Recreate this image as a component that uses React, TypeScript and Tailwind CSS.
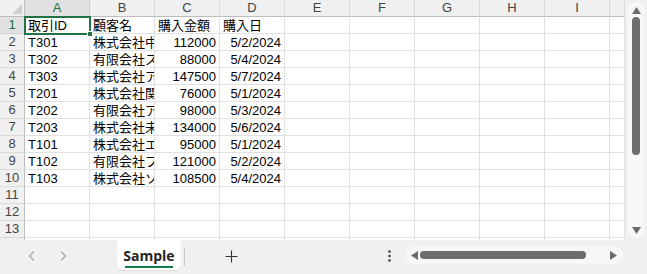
import React from 'react';

const COLS = ['A', 'B', 'C', 'D', 'E', 'F', 'G', 'H', 'I', ''];
const ROW_COUNT = 14;

// 顧客名 is cut at the cell edge, as in the sheet
const data: [string, string, string, string][] = [
  ['取引ID', '顧客名', '購入金額', '購入日'],
  ['T301', '株式会社中', '112000', '5/2/2024'],
  ['T302', '有限会社ス', '88000', '5/4/2024'],
  ['T303', '株式会社ア', '147500', '5/7/2024'],
  ['T201', '株式会社関', '76000', '5/1/2024'],
  ['T202', '有限会社ア', '98000', '5/3/2024'],
  ['T203', '株式会社未', '134000', '5/6/2024'],
  ['T101', '株式会社エ', '95000', '5/1/2024'],
  ['T102', '有限会社ブ', '121000', '5/2/2024'],
  ['T103', '株式会社ソ', '108500', '5/4/2024'],
];

const font = { fontFamily: '"Liberation Sans", "Noto Sans CJK JP", sans-serif' };

function Cell({ value, col }: { value?: string; col: number }) {
  const right = col >= 2 && col <= 3 && value && /^[\d/]+$/.test(value);
  return (
    <div
      className={`h-[17px] border-r border-b border-[#e1e1e1] bg-white overflow-hidden whitespace-nowrap px-[3px] text-[13px] leading-[17px] text-black ${right ? 'text-right' : 'text-left'}`}
    >
      {value}
    </div>
  );
}

function Grid() {
  return (
    <div className="relative flex-1 overflow-hidden bg-white">
      <div className="grid grid-cols-[25px_repeat(9,65px)_15px]" style={font}>
        {/* header row */}
        <div className="relative h-[17px] bg-[#f0f0f0] border-r border-b border-[#bdbdbd]">
          <svg className="absolute right-[2px] bottom-[2px]" width="10" height="10" viewBox="0 0 10 10">
            <path d="M10 0 L10 10 L0 10 Z" fill="#cfcfcf" />
          </svg>
        </div>
        {COLS.map((c, i) => (
          <div
            key={c + i}
            className={`h-[17px] border-r border-b flex items-center justify-center text-[13px] ${
              i === 0
                ? 'bg-[#e1e1e1] border-r-[#cfcfcf] border-b-[#217346] text-[#217346]'
                : 'bg-[#f0f0f0] border-r-[#dadada] border-b-[#bdbdbd] text-[#444]'
            }`}
          >
            {c}
          </div>
        ))}
        {Array.from({ length: ROW_COUNT }, (_, r) => (
          <React.Fragment key={r}>
            <div
              className={`h-[17px] border-r border-b flex items-center justify-center text-[13px] ${
                r === 0
                  ? 'bg-[#e1e1e1] border-r-[#217346] border-b-[#cfcfcf] text-[#217346]'
                  : 'bg-[#f0f0f0] border-r-[#bdbdbd] border-b-[#dadada] text-[#444]'
              }`}
            >
              {r + 1}
            </div>
            {COLS.map((_, c) => (
              <Cell key={c} col={c} value={data[r]?.[c]} />
            ))}
          </React.Fragment>
        ))}
      </div>
      {/* active cell selection */}
      <div className="absolute left-[24px] top-[16px] w-[67px] h-[19px] border-2 border-[#217346] pointer-events-none">
        <div className="absolute -right-[4px] -bottom-[4px] w-[6px] h-[6px] bg-[#217346] border border-white" />
      </div>
    </div>
  );
}

function VScroll() {
  return (
    <div className="w-[22px] bg-[#f0f0f0] flex justify-center pt-[2px] pb-[2px]">
      <div className="w-[16px] h-full rounded-full bg-[#f7f7f7] flex flex-col items-center">
        <svg className="mt-[5px]" width="9" height="7" viewBox="0 0 9 7">
          <path d="M4.5 0 L9 7 L0 7 Z" fill="#6b6b6b" />
        </svg>
        <div className="mt-[3px] w-[8px] h-[138px] rounded-full bg-[#6d6d6d]" />
        <div className="flex-1" />
        <svg className="mb-[4px]" width="9" height="7" viewBox="0 0 9 7">
          <path d="M0 0 L9 0 L4.5 7 Z" fill="#6b6b6b" />
        </svg>
      </div>
    </div>
  );
}

function BottomBar() {
  return (
    <div className="h-[34px] bg-[#f0f0f0] flex items-start" style={font}>
      <div className="flex items-center h-[32px] pl-[26px] gap-[19px]">
        <svg width="12" height="12" viewBox="0 0 12 12">
          <path d="M8 1.5 L3.5 6 L8 10.5" fill="none" stroke="#a6a6a6" strokeWidth="1.2" />
        </svg>
        <svg width="12" height="12" viewBox="0 0 12 12">
          <path d="M4 1.5 L8.5 6 L4 10.5" fill="none" stroke="#a6a6a6" strokeWidth="1.2" />
        </svg>
      </div>
      <div className="ml-[48px] w-[64px] h-[30px] bg-white rounded-b-[5px] shadow-[0_1px_1px_rgba(0,0,0,0.08)] flex flex-col items-center pt-[7px]">
        <span className="text-[14px] font-bold text-[#242424] leading-[17px]" style={{ fontFamily: '"Open Sans", "Liberation Sans", sans-serif' }}>
          Sample
        </span>
        <div className="mt-[2px] w-[48px] h-[2px] bg-[#107c41]" />
      </div>
      <div className="ml-[3px] mt-[8px] w-px h-[18px] bg-[#c8c8c8]" />
      <div className="ml-[40px] h-[32px] flex items-center">
        <svg width="13" height="13" viewBox="0 0 13 13">
          <path d="M6.5 0.5 V12.5 M0.5 6.5 H12.5" stroke="#333" strokeWidth="1.1" />
        </svg>
      </div>
      <div className="ml-[150px] h-[32px] flex items-center">
        <svg width="3" height="12" viewBox="0 0 3 12">
          <circle cx="1.5" cy="1.5" r="1.2" fill="#333" />
          <circle cx="1.5" cy="6" r="1.2" fill="#333" />
          <circle cx="1.5" cy="10.5" r="1.2" fill="#333" />
        </svg>
      </div>
      <div className="ml-[14px] mt-[6px] w-[218px] h-[18px] rounded-full bg-[#f7f7f7] flex items-center px-[6px]">
        <svg width="7" height="9" viewBox="0 0 7 9">
          <path d="M0 4.5 L7 0 L7 9 Z" fill="#6b6b6b" />
        </svg>
        <div className="ml-[2px] w-[166px] h-[8px] rounded-full bg-[#6d6d6d]" />
        <div className="flex-1" />
        <svg width="7" height="9" viewBox="0 0 7 9">
          <path d="M0 0 L7 4.5 L0 9 Z" fill="#6b6b6b" />
        </svg>
      </div>
    </div>
  );
}

export default function App() {
  return (
    <div className="w-[647px] h-[274px] flex flex-col overflow-hidden bg-[#f0f0f0]">
      <div className="flex h-[240px]">
        <Grid />
        <VScroll />
      </div>
      <BottomBar />
    </div>
  );
}
